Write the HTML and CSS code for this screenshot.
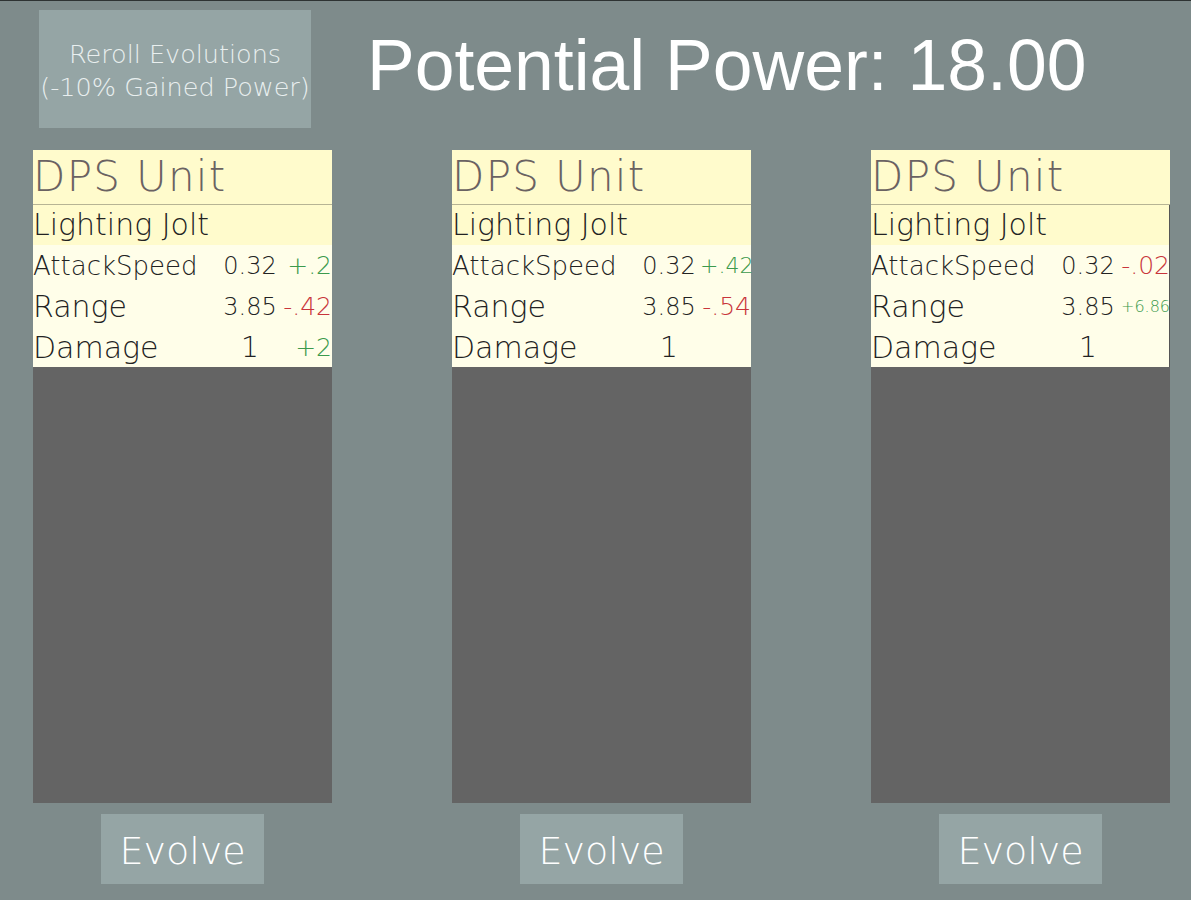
FILE: index.html
```html
<!DOCTYPE html>
<html lang="en">

<head>
    <meta charset="UTF-8">
    <meta name="viewport" content="width=device-width, initial-scale=1.0">
    <title>Evolve</title>
    <link rel="stylesheet" href="styles.css">
</head>

<body>

    <div class="top-bar">
        <button class="reroll-btn">Reroll Evolutions<br>(-10% Gained Power)</button>
        <h1 class="power">Potential Power: 18.00</h1>
    </div>

    <div class="choices">

        <div class="choice">
            <div class="card">
                <div class="card-type">DPS Unit</div>
                <div class="card-name">Lighting Jolt</div>
                <div class="stats">
                    <div class="stat-label size-s">AttackSpeed</div>
                    <div class="stat-value">0.32</div>
                    <div class="stat-delta up size-m">+.2</div>

                    <div class="stat-label size-l">Range</div>
                    <div class="stat-value">3.85</div>
                    <div class="stat-delta down size-m">-.42</div>

                    <div class="stat-label size-l">Damage</div>
                    <div class="stat-value big">1</div>
                    <div class="stat-delta up size-m">+2</div>
                </div>
                <div class="card-body"></div>
            </div>
            <button class="evolve-btn">Evolve</button>
        </div>

        <div class="choice">
            <div class="card">
                <div class="card-type">DPS Unit</div>
                <div class="card-name">Lighting Jolt</div>
                <div class="stats">
                    <div class="stat-label size-s">AttackSpeed</div>
                    <div class="stat-value">0.32</div>
                    <div class="stat-delta up size-s">+.42</div>

                    <div class="stat-label size-l">Range</div>
                    <div class="stat-value">3.85</div>
                    <div class="stat-delta down size-m">-.54</div>

                    <div class="stat-label size-l">Damage</div>
                    <div class="stat-value big">1</div>
                    <div class="stat-delta"></div>
                </div>
                <div class="card-body"></div>
            </div>
            <button class="evolve-btn">Evolve</button>
        </div>

        <div class="choice">
            <div class="card edged">
                <div class="card-type">DPS Unit</div>
                <div class="card-name">Lighting Jolt</div>
                <div class="stats">
                    <div class="stat-label size-s">AttackSpeed</div>
                    <div class="stat-value">0.32</div>
                    <div class="stat-delta down size-m">-.02</div>

                    <div class="stat-label size-l">Range</div>
                    <div class="stat-value">3.85</div>
                    <div class="stat-delta up size-xs">+6.86</div>

                    <div class="stat-label size-l">Damage</div>
                    <div class="stat-value big">1</div>
                    <div class="stat-delta"></div>
                </div>
                <div class="card-body"></div>
            </div>
            <button class="evolve-btn">Evolve</button>
        </div>

    </div>

</body>

</html>
```

FILE: styles.css
```css
body {
    margin: 0;
    padding: 0;
    height: 899px;
    overflow: hidden;
    background-color: #7e8b8b;
    border-top: 1px solid #2e3333;
    font-family: "DejaVu Sans", Lato, sans-serif;
    font-weight: 200;
}

.top-bar {
    display: flex;
    align-items: flex-start;
    padding: 9px 0 0 39px;
    height: 140px;
    box-sizing: border-box;
}

.reroll-btn {
    width: 272px;
    height: 118px;
    background-color: #95a5a5;
    color: #e9efef;
    border: none;
    font-family: inherit;
    font-weight: 200;
    font-size: 25.5px;
    line-height: 33px;
    padding: 3px 0 0;
    white-space: nowrap;
}

.power {
    margin: 14px 0 0 56px;
    font-family: "Liberation Sans", Arial, sans-serif;
    font-weight: normal;
    font-size: 71.5px;
    line-height: 82px;
    color: #fff;
}

.choices {
    display: flex;
    gap: 120px;
    padding: 9px 0 0 33px;
}

.choice {
    width: 299px;
    display: flex;
    flex-direction: column;
    align-items: center;
}

.card {
    width: 100%;
    height: 653px;
    display: flex;
    flex-direction: column;
}

.card-type {
    height: 54px;
    background-color: #fffbcc;
    border-bottom: 1px solid #b7b494;
    color: #6a6262;
    font-size: 42px;
    line-height: 54px;
    letter-spacing: 1.3px;
    white-space: nowrap;
}

.card-name {
    height: 40px;
    background-color: #fffbcc;
    color: #222;
    font-size: 30px;
    line-height: 40px;
    white-space: nowrap;
}

.edged .card-name,
.edged .stats {
    box-shadow: inset -1px 0 0 #555;
}

.stats {
    height: 122px;
    background-color: #fffee9;
    display: grid;
    grid-template-columns: 1fr 62px 51px;
    grid-auto-rows: 41px;
    align-items: center;
    color: #222;
}

.stat-label {
    white-space: nowrap;
}

.stat-value {
    text-align: center;
    white-space: nowrap;
    font-size: 24px;
}

.stat-value.big {
    font-size: 28px;
}

.stat-delta {
    text-align: right;
    white-space: nowrap;
    direction: rtl;
    unicode-bidi: plaintext;
}

.up {
    color: #3c9a4c;
}

.down {
    color: #c8353b;
}

.size-xs {
    font-size: 16px;
}

.size-s {
    font-size: 22px;
}

.size-m {
    font-size: 25px;
}

.size-l {
    font-size: 30px;
}

.stat-label.size-s {
    font-size: 26px;
}

.card-body {
    flex: 1;
    background-color: #646464;
}

.evolve-btn {
    margin-top: 11px;
    width: 163px;
    height: 70px;
    background-color: #95a5a5;
    color: #fff;
    border: none;
    font-family: inherit;
    font-weight: 200;
    font-size: 38px;
    padding: 4px 0 0;
}
```
